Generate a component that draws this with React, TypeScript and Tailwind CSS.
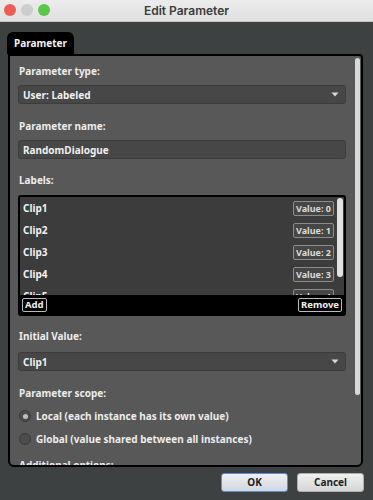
import React from "react";

const labels = ["Clip1", "Clip2", "Clip3", "Clip4", "Clip5"];

const font = { fontFamily: '"Noto Sans", "Open Sans", sans-serif' };

function Caret() {
    return (
        <svg width="8" height="5" viewBox="0 0 8 5" className="shrink-0">
            <path d="M0.5 0.5 L7.5 0.5 L4 4.5 Z" fill="#d8d8d8" />
        </svg>
    );
}

function Select({ value, className = "" }: { value: string; className?: string }) {
    return (
        <div className={`shrink-0 flex items-center justify-between h-[19px] rounded-[3px] border border-[#3c3c3c] bg-[#474747] pl-[4px] pr-[6px] ${className}`}>
            <span className="text-[10px] font-bold text-[#f0f0f0] leading-none">{value}</span>
            <Caret />
        </div>
    );
}

function Label({ children, className = "" }: { children: React.ReactNode; className?: string }) {
    return <div className={`shrink-0 h-[16px] pl-[1px] text-[10px] font-bold leading-[16px] text-[#ececec] ${className}`}>{children}</div>;
}

function Radio({ checked, text }: { checked?: boolean; text: string }) {
    return (
        <div className="flex items-center gap-[5px] h-[16px]">
            <span className="flex items-center justify-center w-[12px] h-[12px] rounded-full border border-[#3a3a3a] bg-[#4c4c4c]">
                {checked && <span className="w-[5px] h-[5px] rounded-full bg-[#bdbdbd]" />}
            </span>
            <span className="text-[10px] font-bold text-[#ececec] leading-none">{text}</span>
        </div>
    );
}

export default function App() {
    return (
        <div className="w-[373px] h-[500px] overflow-hidden flex flex-col bg-[#3e4142]" style={font}>
            {/* Title bar */}
            <div className="relative h-[22px] shrink-0 flex items-center justify-center bg-gradient-to-b from-[#ececec] to-[#e0e0e0] border-b border-[#c4c4c4]">
                <div className="absolute left-[4px] top-[4px] flex gap-[5px]">
                    <span className="w-[12px] h-[12px] rounded-full bg-[#ee5d55]" />
                    <span className="w-[12px] h-[12px] rounded-full bg-[#cdcdcd]" />
                    <span className="w-[12px] h-[12px] rounded-full bg-[#5bc64a]" />
                </div>
                <span className="text-[12px] font-semibold text-[#3b3b3b]" style={{ fontFamily: 'Inter, "Noto Sans", sans-serif' }}>Edit Parameter</span>
            </div>

            <div className="flex-1 flex flex-col pt-[10px] pl-[7px] pr-[9px]">
                {/* Tab */}
                <div className="w-[67px] h-[22px] shrink-0 rounded-t-[6px] bg-black flex items-center pl-[7px]">
                    <span className="text-[10px] font-bold text-[#f2f2f2] leading-none">Parameter</span>
                </div>

                {/* Panel */}
                <div className="ml-[1px] mr-[1px] h-[413px] shrink-0 flex rounded-b-[6px] rounded-tr-[4px] border-2 border-black bg-[#585858] overflow-hidden">
                    <div className="flex-1 min-w-0 pl-[8px] pr-[7px] pt-[7px] flex flex-col overflow-hidden">
                        <Label>Parameter type:</Label>
                        <Select value="User: Labeled" className="mt-[6px]" />

                        <Label className="mt-[14px]">Parameter name:</Label>
                        <div className="shrink-0 mt-[6px] h-[19px] flex items-center rounded-[3px] border border-[#3c3c3c] bg-[#474747] pl-[4px]">
                            <span className="text-[10px] font-bold text-[#f0f0f0] leading-none">RandomDialogue</span>
                        </div>

                        <Label className="mt-[13px]">Labels:</Label>
                        <div className="shrink-0 mt-[7px] h-[121px] flex flex-col rounded-[3px] border-2 border-black bg-[#3c3c3c] overflow-hidden">
                            <div className="flex-1 min-h-0 flex overflow-hidden">
                                <div className="flex-1 flex flex-col pl-[3px] pr-[2px] overflow-hidden">
                                    {labels.map((l, i) => (
                                        <div key={l} className="h-[22px] shrink-0 flex items-center justify-between">
                                            <span className="text-[10px] font-bold text-[#f2f2f2] leading-none">{l}</span>
                                            <span className="h-[15px] px-[2px] flex items-center rounded-[2px] border border-[#8c8c8c] bg-[#464646] text-[9px] font-bold text-[#dadada] leading-none">
                                                Value: {i}
                                            </span>
                                        </div>
                                    ))}
                                </div>
                                <div className="w-[8px] pt-[1px]">
                                    <div className="ml-[1px] w-[6px] h-[79px] rounded-full bg-[#e2e2e2]" />
                                </div>
                            </div>
                            <div className="h-[19px] shrink-0 bg-black flex items-center justify-between px-[2px]">
                                <span className="h-[14px] px-[2px] flex items-center rounded-[2px] border border-[#bbbbbb] text-[9.5px] font-bold text-[#f0f0f0] leading-none">Add</span>
                                <span className="h-[14px] px-[2px] flex items-center rounded-[2px] border border-[#bbbbbb] text-[9.5px] font-bold text-[#f0f0f0] leading-none">Remove</span>
                            </div>
                        </div>

                        <Label className="mt-[12px]">Initial Value:</Label>
                        <Select value="Clip1" className="mt-[8px]" />

                        <Label className="mt-[14px]">Parameter scope:</Label>
                        <div className="shrink-0 mt-[7px] ml-[1px]">
                            <Radio checked text="Local (each instance has its own value)" />
                        </div>
                        <div className="shrink-0 mt-[7px] ml-[1px]">
                            <Radio text="Global (value shared between all instances)" />
                        </div>
                        <Label className="mt-[10px]">Additional options:</Label>
                    </div>
                    {/* Scrollbar */}
                    <div className="w-[8px] shrink-0 pt-[2px]">
                        <div className="ml-[2px] w-[5px] h-[337px] rounded-full bg-[#d9d9d9]" />
                    </div>
                </div>

                {/* Buttons */}
                <div className="mt-[6px] flex justify-end gap-[9px]">
                    <button className="w-[67px] h-[19px] rounded-[3px] border border-[#5a8fdc] bg-gradient-to-b from-[#eef0f4] to-[#d2d7df] text-[10px] font-bold text-[#1e1e1e]">OK</button>
                    <button className="w-[67px] h-[19px] rounded-[3px] border border-[#b0b0b0] bg-gradient-to-b from-[#f0f0f0] to-[#d6d6d6] text-[10px] font-bold text-[#1e1e1e]">Cancel</button>
                </div>
            </div>
        </div>
    );
}
